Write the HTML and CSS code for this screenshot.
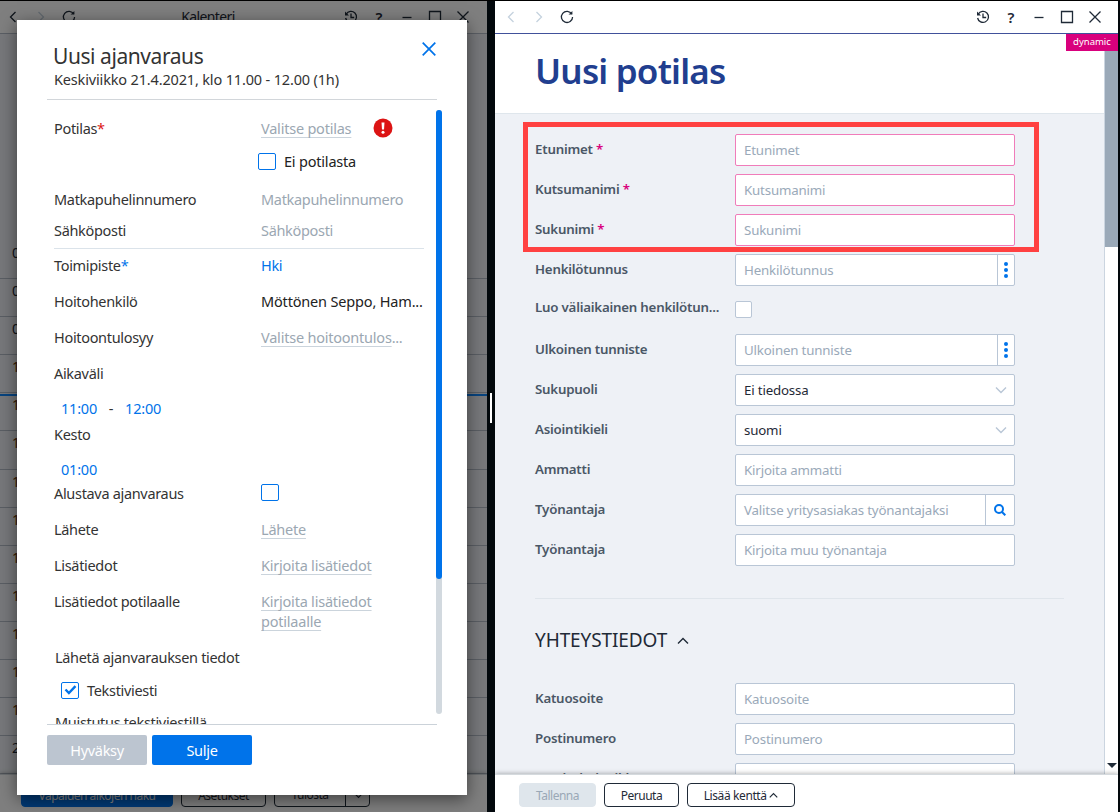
FILE: index.html
```html
<!DOCTYPE html>
<html lang="fi">
<head>
  <meta charset="UTF-8" />
  <meta name="viewport" content="width=device-width, initial-scale=1.0"/>
  <title>Uusi potilas</title>
  <link rel="stylesheet" href="styles.css">
</head>
<body>
  <svg class="sprite" width="0" height="0">
    <symbol id="i-back" viewBox="0 0 20 20"><path d="M12.5 5 7.5 10l5 5"/></symbol>
    <symbol id="i-forward" viewBox="0 0 20 20"><path d="m7.5 5 5 5-5 5"/></symbol>
    <symbol id="i-reload" viewBox="0 0 20 20"><path d="M14.8 7A5.6 5.6 0 1 0 15.6 10"/><path d="M15.4 4v3.6h-3.8z" fill="currentColor" stroke="none"/></symbol>
    <symbol id="i-history" viewBox="0 0 20 20"><path d="M5.2 7.2A5.5 5.5 0 1 1 4.6 11M10 6.5v4h3.2"/><path d="M4 4.5v4h4z" fill="currentColor" stroke="none"/></symbol>
    <symbol id="i-min" viewBox="0 0 20 20"><path d="M5.5 10.5h9"/></symbol>
    <symbol id="i-max" viewBox="0 0 20 20"><path d="M4.5 4.5h11v11h-11z"/></symbol>
    <symbol id="i-close" viewBox="0 0 20 20"><path d="m4.5 4.5 11 11M15.5 4.5l-11 11"/></symbol>
    <symbol id="i-down" viewBox="0 0 12 12"><path d="m1 3.5 5 5 5-5"/></symbol>
    <symbol id="i-up" viewBox="0 0 12 12"><path d="m1 8.500 5-5 5 5"/></symbol>
  </svg>

  <div class="desktop">
    <div class="window calendar">
      <div class="toolbar">
        <svg class="icon"><use href="#i-back"/></svg>
        <svg class="icon faded"><use href="#i-forward"/></svg>
        <svg class="icon"><use href="#i-reload"/></svg>
        <span class="toolbar-title">Kalenteri</span>
        <svg class="icon"><use href="#i-history"/></svg>
        <span class="help">?</span>
        <svg class="icon"><use href="#i-min"/></svg>
        <svg class="icon"><use href="#i-max"/></svg>
        <svg class="icon"><use href="#i-close"/></svg>
      </div>
      <div class="hours">
        <div class="hour">07</div>
        <div class="hour">08</div>
        <div class="hour">09</div>
        <div class="hour late">10</div>
        <div class="hour late now">11</div>
        <div class="hour late">12</div>
        <div class="hour late">13</div>
        <div class="hour late">14</div>
        <div class="hour late">15</div>
        <div class="hour late">16</div>
        <div class="hour late">17</div>
        <div class="hour late">18</div>
        <div class="hour late">19</div>
        <div class="hour">20</div>
      </div>
      <div class="footer">
        <button class="btn search">Vapaiden aikojen haku</button>
        <button class="btn settings">Asetukset</button>
        <button class="btn print"><span>Tulosta</span><svg><use href="#i-down"/></svg></button>
      </div>

      <div class="overlay"></div>
      <div class="modal">
        <div class="modal-head">
          <div>
            <h2>Uusi ajanvaraus</h2>
            <p>Keskiviikko 21.4.2021, klo 11.00 - 12.00 (1h)</p>
          </div>
          <svg class="modal-close" viewBox="0 0 14 14"><path d="m.7.7 12.600 12.600M13.300.7.7 13.300"/></svg>
        </div>
        <div class="modal-body">
          <div class="fields">
            <div class="row">
              <span class="name">Potilas<b class="red">*</b></span>
              <span class="link">Valitse potilas</span>
              <svg class="alert" viewBox="0 0 20 20"><circle cx="10" cy="10" r="9.500" fill="#dc1414"/><path d="M8.500 4.500h3l-.5 7H9z" fill="#fff"/><circle cx="10" cy="14.300" r="1.500" fill="#fff"/></svg>
            </div>
            <div class="row no-patient"><i class="check"></i>Ei potilasta</div>
            <div class="row phone"><span class="name">Matkapuhelinnumero</span><span class="hint">Matkapuhelinnumero</span></div>
            <div class="row email"><span class="name">Sähköposti</span><span class="hint">Sähköposti</span></div>
            <div class="row office"><span class="name">Toimipiste<b class="blue">*</b></span><span class="blue">Hki</span></div>
            <div class="row"><span class="name">Hoitohenkilö</span><span class="dark">Möttönen Seppo, Ham...</span></div>
            <div class="row"><span class="name">Hoitoontulosyy</span><span class="link">Valitse hoitoontulos</span><span class="hint">...</span></div>
            <div class="row"><span class="name">Aikaväli</span></div>
            <div class="row times"><span class="blue">11:00</span><span class="dash">-</span><span class="blue">12:00</span></div>
            <div class="row duration">Kesto</div>
            <div class="row length"><span class="blue">01:00</span></div>
            <div class="row tentative"><span class="name">Alustava ajanvaraus</span><i class="check"></i></div>
            <div class="row"><span class="name">Lähete</span><span class="link">Lähete</span></div>
            <div class="row"><span class="name">Lisätiedot</span><span class="link">Kirjoita lisätiedot</span></div>
            <div class="row multi"><span class="name">Lisätiedot potilaalle</span><span class="link">Kirjoita lisätiedot<br>potilaalle</span></div>
            <div class="row send">Lähetä ajanvarauksen tiedot</div>
            <div class="row sms"><i class="check"><svg viewBox="0 0 12 10"><path d="m1 4.500 3.400 3.500L11 1.200"/></svg></i>Tekstiviesti</div>
            <div class="row remind">Muistutus tekstiviestillä</div>
          </div>
          <div class="scroll"><div class="thumb"></div></div>
        </div>
        <div class="modal-foot">
          <button class="disabled">Hyväksy</button>
          <button>Sulje</button>
        </div>
      </div>
    </div>

    <div class="splitter"><div class="handle"></div></div>

    <div class="window patient">
      <div class="toolbar">
        <svg class="icon faded"><use href="#i-back"/></svg>
        <svg class="icon faded"><use href="#i-forward"/></svg>
        <svg class="icon"><use href="#i-reload"/></svg>
        <span class="toolbar-title"></span>
        <svg class="icon"><use href="#i-history"/></svg>
        <span class="help">?</span>
        <svg class="icon"><use href="#i-min"/></svg>
        <svg class="icon"><use href="#i-max"/></svg>
        <svg class="icon"><use href="#i-close"/></svg>
      </div>
      <div class="content">
        <div class="page">
          <h1>Uusi potilas</h1>
          <div class="form">
            <div class="highlight"></div>
            <div class="field"><label>Etunimet <b>*</b></label><div class="input required">Etunimet</div></div>
            <div class="field"><label>Kutsumanimi <b>*</b></label><div class="input required">Kutsumanimi</div></div>
            <div class="field"><label>Sukunimi <b>*</b></label><div class="input required">Sukunimi</div></div>
            <div class="field"><label>Henkilötunnus</label><div class="input">Henkilötunnus<span class="addon dots"><i></i><i></i><i></i></span></div></div>
            <div class="field temp"><label>Luo väliaikainen henkilötun...</label><div class="box"></div></div>
            <div class="field"><label>Ulkoinen tunniste</label><div class="input">Ulkoinen tunniste<span class="addon dots"><i></i><i></i><i></i></span></div></div>
            <div class="field"><label>Sukupuoli</label><div class="input select">Ei tiedossa<svg><use href="#i-down"/></svg></div></div>
            <div class="field"><label>Asiointikieli</label><div class="input select">suomi<svg><use href="#i-down"/></svg></div></div>
            <div class="field"><label>Ammatti</label><div class="input">Kirjoita ammatti</div></div>
            <div class="field"><label>Työnantaja</label><div class="input">Valitse yritysasiakas työnantajaksi<span class="addon find"><svg viewBox="0 0 12 12"><circle cx="5" cy="5" r="4"/><path d="m8 8 3.300 3.300"/></svg></span></div></div>
            <div class="field"><label>Työnantaja</label><div class="input">Kirjoita muu työnantaja</div></div>
            <h3>YHTEYSTIEDOT <svg><use href="#i-up"/></svg></h3>
            <div class="field"><label>Katuosoite</label><div class="input">Katuosoite</div></div>
            <div class="field"><label>Postinumero</label><div class="input">Postinumero</div></div>
            <div class="field"><label>Postitoimipaikka</label><div class="input"></div></div>
          </div>
        </div>
        <div class="page-scroll"><div class="page-thumb"></div><div class="arrow"></div></div>
        <span class="badge">dynamic</span>
      </div>
      <div class="footer">
        <button class="btn save">Tallenna</button>
        <button class="btn cancel">Peruuta</button>
        <button class="btn add">Lisää kenttä <svg><use href="#i-up"/></svg></button>
      </div>
    </div>
  </div>
</body>
</html>
```
FILE: styles.css
```css
* {
  box-sizing: border-box;
}
body {
  margin: 0;
  font-family: "Noto Sans", "Open Sans", sans-serif;
  color: #1f2a37;
}
button {
  font-family: inherit;
  padding: 0;
}
svg {
  fill: none;
  stroke: currentColor;
  flex: none;
}
.sprite {
  position: absolute;
}
.desktop {
  display: flex;
  width: 1120px;
  height: 812px;
  overflow: hidden;
  background: #02080c;
  border-top: 1px solid #000;
}
.window {
  display: flex;
  flex-direction: column;
  height: 811px;
  background: #fff;
  overflow: hidden;
}
.calendar {
  position: relative;
  width: 487px;
}
.patient {
  width: 623px;
}
.splitter {
  width: 8px;
  display: flex;
  align-items: center;
  padding-left: 3px;
}
.handle {
  width: 2px;
  height: 30px;
  background: #fff;
  margin-top: 3px;
}

/* window toolbar */
.toolbar {
  display: flex;
  align-items: center;
  gap: 8px;
  height: 33px;
  flex: none;
  padding: 0 13px 0 6px;
  border-bottom: 1px solid #41519b;
}
.calendar .toolbar {
  border-color: #b4bcc8;
  padding: 0 14px 0 3px;
}
.toolbar .icon {
  width: 20px;
  height: 20px;
  stroke-width: 1.3;
}
.toolbar .faded {
  color: #c5d2de;
}
.toolbar-title {
  flex: 1;
  font-size: 14px;
  text-align: center;
  padding: 0 4px 2px 0;
  letter-spacing: -0.6px;
}
.help {
  width: 20px;
  text-align: center;
  font-size: 15px;
  font-weight: 600;
}

/* calendar background */
.hours {
  flex: 1;
  background: #eef1f6;
  padding-top: 207px;
}
.hour {
  height: 38.100px;
  padding: 2px 0 0 12px;
  font-size: 14px;
  border-bottom: 1px solid #b4bcc8;
}
.late {
  color: #6b3300;
}
.now {
  position: relative;
}
.now::before {
  content: "";
  position: absolute;
  left: 0;
  top: 1px;
  width: 100%;
  height: 2px;
  background: #1088ff;
}
.overlay {
  position: absolute;
  inset: 0;
  background: rgba(0, 0, 0, 0.5);
}

/* bottom bars */
.footer {
  position: relative;
  display: flex;
  gap: 8px;
  height: 38px;
  flex: none;
  padding: 8px 0 0 24px;
  background: #fff;
  border-top: 1px solid #d5dade;
  box-shadow: 0 -1px 4px rgba(0, 0, 0, 0.25);
}
.calendar .footer {
  padding-left: 21px;
}
.btn {
  height: 24px;
  border: 1px solid #1f2a37;
  border-radius: 4px;
  background: #fff;
  color: #1f2a37;
  font-size: 12px;
  letter-spacing: -0.5px;
}
.btn svg {
  width: 9px;
  height: 9px;
  stroke-width: 1.6;
}
.search {
  width: 152px;
  background: #0073ea;
  border-color: #0073ea;
  color: #fff;
}
.settings {
  width: 85px;
}
.print {
  display: flex;
  align-items: center;
  width: 96px;
}
.print span {
  width: 71px;
  line-height: 22px;
  border-right: 1px solid #1f2a37;
}
.print svg {
  margin-left: 8px;
}
.save {
  width: 77px;
  background: #dfe6ec;
  border-color: #dfe6ec;
  color: #9aa8b6;
}
.cancel {
  width: 75px;
}
.add {
  width: 108px;
  letter-spacing: -0.4px;
}

/* booking dialog */
.modal {
  position: absolute;
  left: 17px;
  top: 19px;
  width: 450px;
  height: 775px;
  padding: 0 25px 0 30px;
  background: #fff;
  color: #333;
  font-size: 14.500px;
  letter-spacing: -0.320px;
  box-shadow: 0 4px 16px rgba(0, 0, 0, 0.5);
}
.modal-head {
  display: flex;
  justify-content: space-between;
  height: 80px;
  width: 390px;
  padding: 22px 0 0 7px;
  border-bottom: 1px solid #d2d6da;
}
.modal-head h2 {
  margin: 0 0 0 -1px;
  font-size: 21px;
  font-weight: 400;
  line-height: 28px;
  letter-spacing: -0.430px;
}
.modal-head p {
  margin: 0;
  line-height: 18px;
  letter-spacing: -0.160px;
}
.modal-close {
  width: 14px;
  height: 14px;
  color: #0073ea;
  stroke-width: 1.7;
  margin-right: 1px;
}
.modal-body {
  display: flex;
  justify-content: space-between;
  height: 624px;
}
.fields {
  width: 389px;
  padding: 10px 12px 0 7px;
  overflow: hidden;
}
.row {
  display: flex;
  align-items: center;
  height: 36px;
  white-space: nowrap;
}
.name {
  width: 207px;
}
.name b {
  font-weight: 400;
}
.red {
  color: #dc1414;
}
.blue {
  color: #0073ea;
}
.dark {
  color: #222;
  letter-spacing: -0.170px;
}
.hint,
.link {
  color: #9ba7b2;
}
.link {
  letter-spacing: -0.220px;
  text-decoration: underline 1px #cbd4dc;
  text-underline-offset: 3px;
  text-decoration-skip-ink: none;
}
.alert {
  width: 20px;
  height: 20px;
  margin-left: 22px;
  stroke: none;
}
.check {
  display: flex;
  align-items: center;
  justify-content: center;
  width: 18px;
  height: 17px;
  border: 1px solid #0073ea;
  border-radius: 2px;
}
.check svg {
  width: 13px;
  height: 10px;
  color: #0073ea;
  stroke-width: 2.4;
}
.no-patient {
  height: 30px;
  padding-left: 204px;
  gap: 8px;
  color: #222;
  letter-spacing: -0.200px;
}
.phone {
  height: 30px;
  margin-top: 8px;
}
.email {
  height: 35px;
  padding-bottom: 2px;
  border-bottom: 1px solid #dbe3ea;
}
.office {
  height: 34px;
  padding-bottom: 2px;
}
.times {
  height: 34px;
  padding-left: 7px;
  letter-spacing: -0.200px;
}
.dash {
  width: 28px;
  text-align: center;
}
.duration {
  height: 18px;
}
.length {
  height: 20px;
  margin-top: 16px;
  padding-left: 7px;
  letter-spacing: -0.200px;
}
.tentative {
  height: 28px;
  margin-bottom: 4px;
}
.tentative .check {
  margin-bottom: 1px;
}
.multi {
  height: 60px;
  align-items: flex-start;
  padding-top: 8px;
  line-height: 20px;
}
.send {
  height: 28px;
  padding-left: 1px;
}
.sms {
  height: 38px;
  padding-left: 7px;
  gap: 8px;
}
.remind {
  height: 26px;
  padding-left: 1px;
}
.scroll {
  width: 6px;
  height: 604px;
  margin-top: 10px;
  border-radius: 3px;
  background: #d2d9df;
}
.thumb {
  height: 469px;
  border-radius: 3px;
  background: #0073ea;
}
.modal-foot {
  display: flex;
  gap: 5px;
  width: 390px;
  padding-top: 10px;
  border-top: 1px solid #cbd2d9;
}
.modal-foot button {
  width: 100px;
  height: 30px;
  border: 0;
  border-radius: 2px;
  background: #0073ea;
  color: #fff;
  font-size: 14.500px;
  letter-spacing: -0.300px;
}
.modal-foot .disabled {
  background: #bcc5d0;
}

/* patient form */
.content {
  position: relative;
  display: flex;
  height: 740px;
}
.page {
  width: 610px;
  overflow: hidden;
  border-right: 1px solid #cbd5e0;
}
h1 {
  height: 80px;
  margin: 0;
  padding-left: 40px;
  border-bottom: 1px solid #dfe6ec;
  color: #213e8f;
  font-size: 35px;
  font-weight: 600;
  line-height: 74px;
  letter-spacing: -0.800px;
}
.form {
  position: relative;
  height: 680px;
  padding: 20px 40px 0;
  background: #eef1f6;
}
.highlight {
  position: absolute;
  left: 28px;
  top: 8px;
  width: 516px;
  height: 130px;
  border: 5px solid #ff4141;
}
.field {
  display: flex;
  height: 32px;
  margin-bottom: 8px;
}
.field label {
  width: 200px;
  color: #4a5766;
  font-size: 13.300px;
  font-weight: 600;
  line-height: 30px;
  letter-spacing: -0.220px;
  white-space: nowrap;
}
.field label b {
  color: #d9007d;
  font-weight: 600;
}
.input {
  display: flex;
  align-items: center;
  width: 280px;
  padding-left: 8px;
  border: 1px solid #b9c6d6;
  border-radius: 2px;
  background: #fff;
  color: #9aa9b9;
  font-size: 13.300px;
  letter-spacing: -0.170px;
  white-space: nowrap;
}
.required {
  border-color: #f07cba;
}
.select {
  color: #1f2a37;
}
.select svg {
  width: 12px;
  height: 12px;
  margin: 0 7px 0 auto;
  color: #b9c6d6;
  stroke-width: 1.4;
}
.addon {
  display: flex;
  align-items: center;
  justify-content: center;
  height: 30px;
  margin-left: auto;
  border-left: 1px solid #b9c6d6;
}
.dots {
  flex-direction: column;
  gap: 2px;
  width: 17px;
  padding: 0 1px 1px 0;
}
.dots i {
  width: 4px;
  height: 4px;
  border-radius: 2px;
  background: #0073ea;
}
.find {
  width: 29px;
}
.find svg {
  width: 12px;
  height: 12px;
  color: #0073ea;
  stroke-width: 2;
}
.temp label {
  line-height: 27px;
}
.box {
  width: 17px;
  height: 17px;
  margin-top: 7px;
  border: 1px solid #b9c6d6;
  border-radius: 2px;
  background: #fff;
}
h3 {
  height: 85px;
  margin: 32px 0 0;
  padding-top: 27px;
  border-top: 1px solid #dfe5eb;
  font-size: 19px;
  font-weight: 400;
  line-height: 28px;
  letter-spacing: -0.100px;
}
h3 svg {
  width: 12px;
  height: 12px;
  margin-left: 5px;
  stroke-width: 1.4;
}
.page-scroll {
  display: flex;
  flex-direction: column;
  justify-content: space-between;
  align-items: center;
  width: 13px;
}
.page-thumb {
  width: 13px;
  height: 213px;
  background: #9aa9b8;
}
.arrow {
  margin-bottom: 6px;
  border: 5px solid transparent;
  border-top-color: #1f2a37;
  border-bottom: 0;
}
.badge {
  position: absolute;
  top: 0;
  right: 0;
  width: 52px;
  height: 17px;
  background: #d9007d;
  color: #fff;
  font-size: 9.500px;
  line-height: 16px;
  text-align: center;
}
```
